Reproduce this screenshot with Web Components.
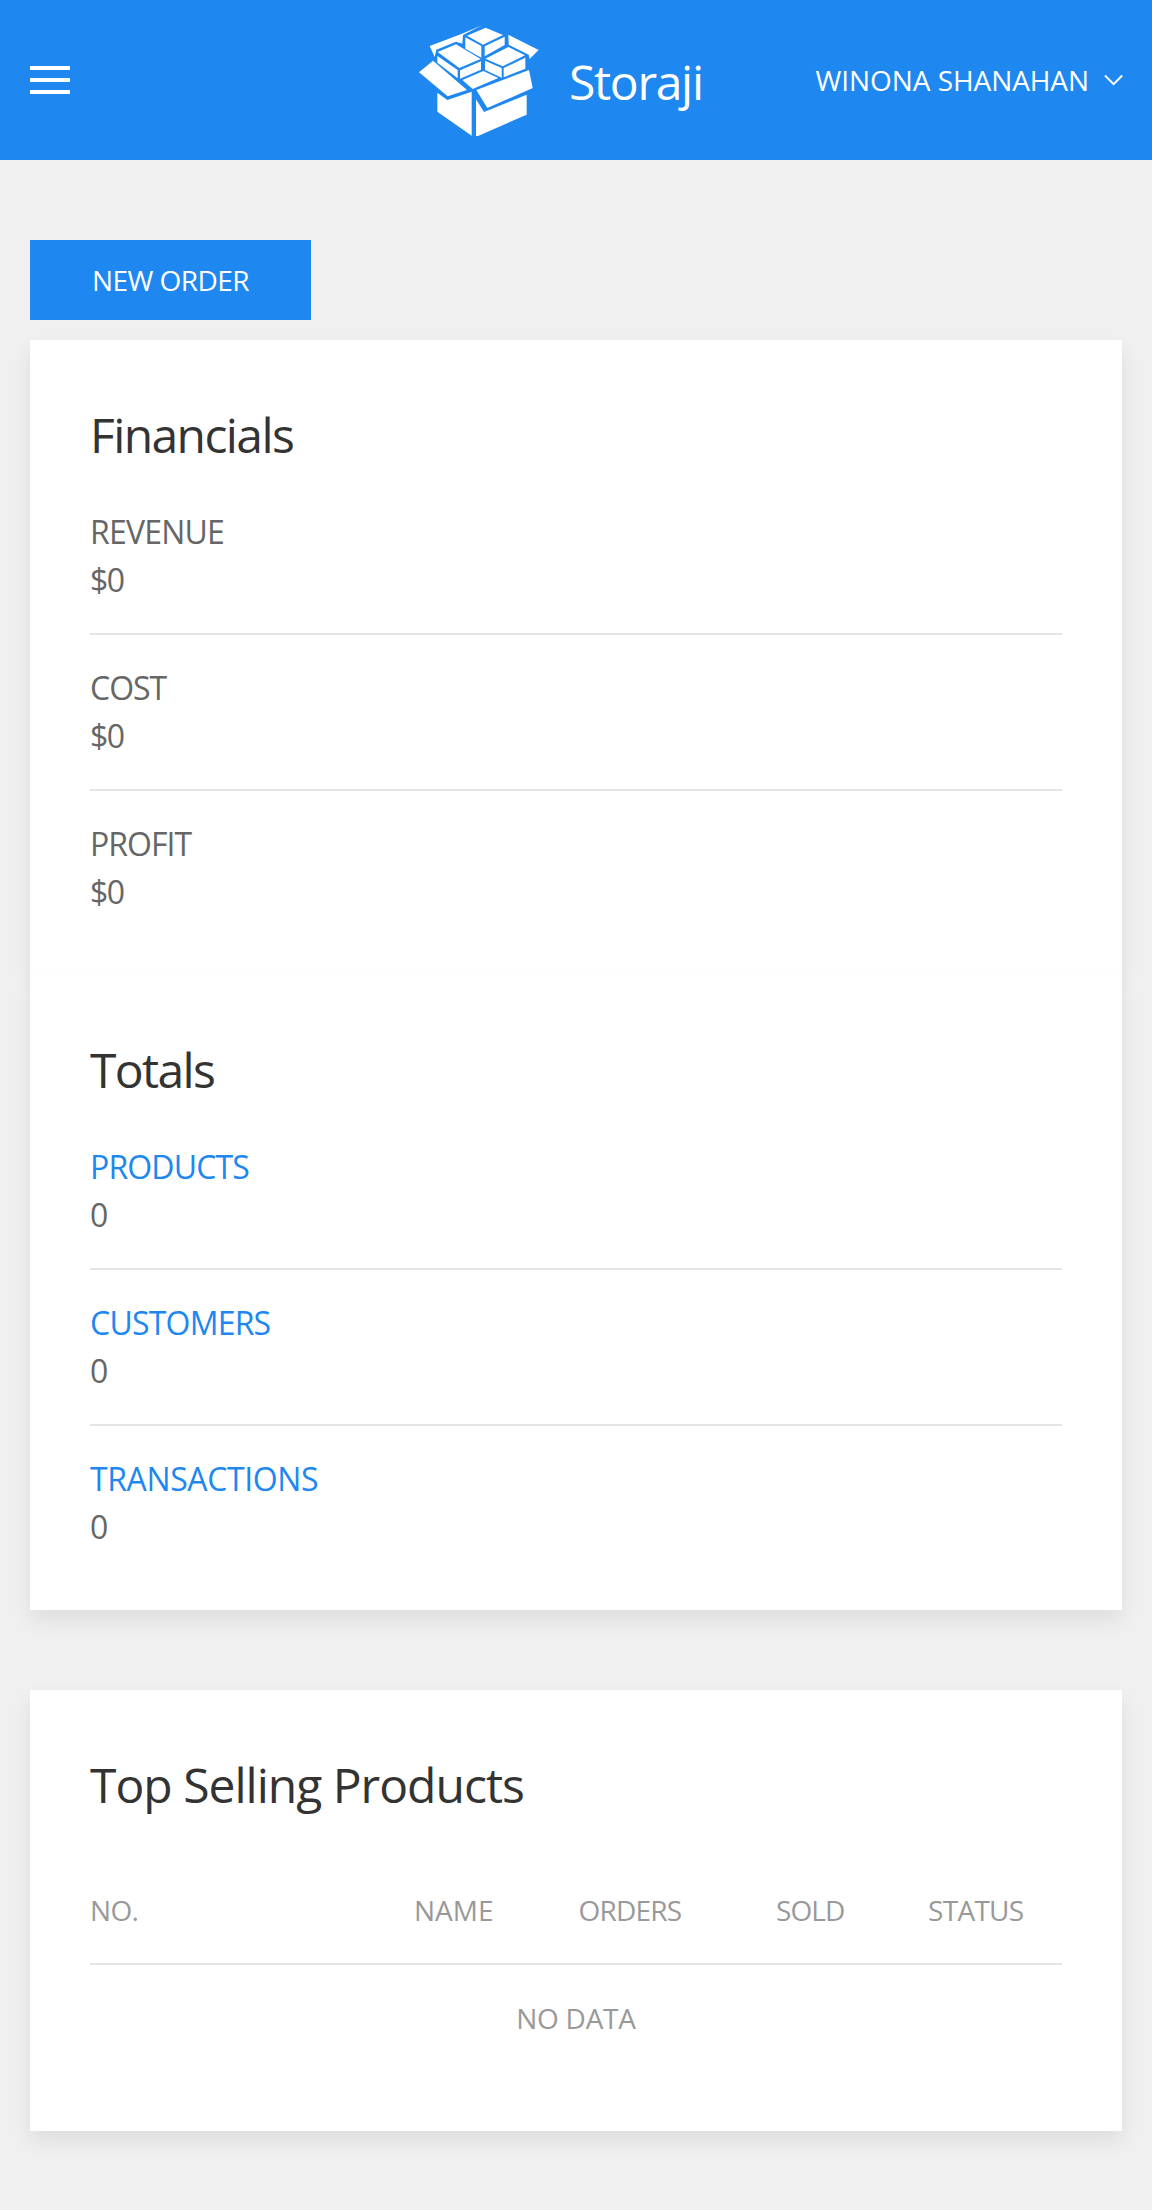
<!DOCTYPE html>
<html lang="en">
<head>
<meta charset="utf-8">
<title>Storaji</title>
<style>
  html, body { margin: 0; }
  body {
    --blue: #1e87f0;
    --line: #e5e5e5;
    min-height: 2210px;
    background: #f0f0f0;
    color: #666;
    font: 400 32px/48px "Open Sans", "Noto Sans", sans-serif;
    display: flow-root;
  }
</style>
</head>
<body>
<app-header>
  <span slot="brand">Storaji</span>
  <span slot="user">WINONA SHANAHAN</span>
</app-header>
<page-main>
  <action-button>NEW ORDER</action-button>
  <panel-card heading="Financials" style="--track:-1.6px">
    <stat-item label="REVENUE" value="$0" style="--track:-.8px"></stat-item>
    <stat-item label="COST" value="$0" style="--track:-1px"></stat-item>
    <stat-item label="PROFIT" value="$0" style="--track:-.95px"></stat-item>
  </panel-card>
  <panel-card heading="Totals" style="--track:-1.65px">
    <stat-item label="PRODUCTS" value="0" link style="--track:-.85px"></stat-item>
    <stat-item label="CUSTOMERS" value="0" link style="--track:-.78px"></stat-item>
    <stat-item label="TRANSACTIONS" value="0" link style="--track:-.38px"></stat-item>
  </panel-card>
  <panel-card heading="Top Selling Products" separate style="--track:-1px">
    <product-table></product-table>
  </panel-card>
</page-main>

<script>
const define = (name, markup, ready) => {
  const template = document.createElement('template');
  template.innerHTML = markup;
  customElements.define(name, class extends HTMLElement {
    constructor() {
      super();
      this.attachShadow({ mode: 'open' }).append(template.content.cloneNode(true));
    }
    connectedCallback() { if (ready) ready(this, this.shadowRoot); }
  });
};

define('menu-icon', `
  <style>:host{display:block;width:40px;height:40px} svg{display:block}</style>
  <svg width="40" height="40" viewBox="0 0 40 40" fill="#fff"><path d="M0 6h40v4H0zM0 18h40v4H0zM0 30h40v4H0z"/></svg>`);

define('chevron-icon', `
  <style>:host{display:block;width:20px;height:20px} svg{display:block}</style>
  <svg width="20" height="20" viewBox="0 0 20 20" fill="none" stroke="#fff" stroke-width="2"><path d="M1 5.500 9.600 14.200 18.200 5.500"/></svg>`);

define('box-logo', `
  <style>:host{display:block;width:120px;height:112px} svg{display:block}</style>
  <svg width="120" height="112" viewBox="57 45 360 336" fill="#fff">
    <path d="M89 108 186 71 246 46 189 75 187 101 168 95 109 119 104 141z"/>
    <path d="M201 77 257 53 309 75 249 104z"/>
    <path d="M196 82 244 108V143L196 116z"/>
    <path d="M254 109 314 80V105L254 139z"/>
    <path d="M325 74 416 120 389 147 386 134 326 104z"/>
    <path d="M113 126 168 103 242 147 178 174z"/>
    <path d="M112 138 173 180V205L112 158z"/>
    <path d="M180 181 243 154V179L180 206z"/>
    <path d="M256 146 325 111 375 136 308 169z"/>
    <path d="M255 152 305 174V203L255 180z"/>
    <path d="M311 174 376 143V176L311 202z"/>
    <path d="M187 210 250 183 295 204 218 237z"/>
    <path d="M57 187 99 152 201 240 143 259z"/>
    <path d="M229 240 387 180 398 234 262 294z"/>
    <path d="M112 248 142 270 215 245V377L112 305z"/>
    <path d="M228 268 252 306 380 254V314L234 378H228z"/>
  </svg>`);

define('app-header', `
  <style>
    :host{display:flex;align-items:center;height:160px;padding:0 28px 0 30px;background:var(--blue);color:#fff}
    box-logo{margin-left:349px;margin-top:2px}
    .brand{margin-left:30px;font-size:48px;line-height:72px;letter-spacing:-1.3px;padding-top:4px}
    .user{display:flex;align-items:center;gap:15px;margin-left:auto;font-size:28px;line-height:42px;letter-spacing:-.07px;padding-bottom:1px}
  </style>
  <menu-icon></menu-icon><box-logo></box-logo>
  <div class="brand"><slot name="brand"></slot></div>
  <div class="user"><slot name="user"></slot><chevron-icon></chevron-icon></div>`);

define('page-main', `
  <style>:host{display:block;padding:80px 30px 0}</style>
  <slot></slot>`);

define('action-button', `
  <style>
    :host{display:block;margin-bottom:20px}
    button{display:block;box-sizing:border-box;width:281px;height:80px;border:0;padding:0;background:var(--blue);color:#fff;font:inherit;font-size:28px;line-height:80px;letter-spacing:-.55px}
  </style>
  <button><slot></slot></button>`);

define('panel-card', `
  <style>
    :host{display:block;padding:60px;background:#fff;box-shadow:0 10px 20px rgba(0,0,0,.08)}
    :host([separate]){margin-top:80px}
    h2{margin:0 0 39px;padding-top:1px;font-size:48px;line-height:67px;font-weight:400;color:#333;letter-spacing:var(--track)}
  </style>
  <h2></h2><slot></slot>`,
  (el, root) => { root.querySelector('h2').textContent = el.getAttribute('heading'); });

define('stat-item', `
  <style>
    :host{display:block}
    :host(:not(:first-child)){margin-top:30px;border-top:2px solid var(--line);padding-top:28px}
    .label{letter-spacing:var(--track)}
    .label,.value{line-height:46px;padding-top:2px}
    :host([link]) .label{color:var(--blue)}
    .value{letter-spacing:-1.500px}
  </style>
  <div class="label"></div><div class="value"></div>`,
  (el, root) => {
    root.querySelector('.label').textContent = el.getAttribute('label');
    root.querySelector('.value').textContent = el.getAttribute('value');
  });

define('product-table', `
  <style>
    :host{display:block;color:#999;font-size:28px;line-height:42px}
    .head{display:grid;grid-template-columns:324px 164.500px 197.500px 152px 134px;padding:32px 0;border-bottom:2px solid var(--line)}
    .empty{padding:32px 0;text-align:center;letter-spacing:-.27px}
  </style>
  <div class="head">
    <span style="letter-spacing:-.65px">NO.</span>
    <span style="letter-spacing:0">NAME</span>
    <span style="letter-spacing:-.8px">ORDERS</span>
    <span style="letter-spacing:-.92px">SOLD</span>
    <span style="letter-spacing:-.7px">STATUS</span>
  </div>
  <div class="empty">NO DATA</div>`);
</script>
</body>
</html>
